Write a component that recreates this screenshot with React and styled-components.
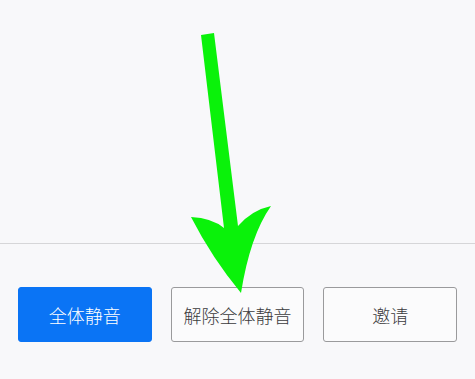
import styled, { createGlobalStyle } from "styled-components"

const Global = createGlobalStyle`
    html, body {
        margin: 0;
        padding: 0;
        background: #f8f8fa;
    }
    body {
        font-family: "Noto Sans CJK SC", "Noto Sans", sans-serif;
    }
`

export default function App () {
    return(
        <Page>
            <Global/>
            <Top/>
            <Divider/>
            <Toolbar>
                <Button primary>全体静音</Button>
                <Button>解除全体静音</Button>
                <Button>邀请</Button>
            </Toolbar>
            <Arrow width="475" height="379" viewBox="0 0 475 379">
                <path
                    d="M201 35 L214 33 L238 226 Q252 210 271 206 Q250 236 241 293 Q212 258 191 217 Q212 218 224 228 Z"
                    fill="#0af20a"
                />
            </Arrow>
        </Page>
    )
}

const Page = styled.div`
    width: 475px;
    height: 379px;
    position: relative;
    overflow: hidden;
    background: #f8f8fa;
`
const Top = styled.div`
    height: 243px;
`
const Divider = styled.div`
    height: 1px;
    background: #d6d6d8;
`
const Toolbar = styled.div`
    display: flex;
    gap: 19px;
    padding: 43px 18px 0 18px;
`
const Button = styled.div`
    width: 134px;
    height: 55px;
    box-sizing: border-box;
    display: flex;
    align-items: center;
    justify-content: center;
    font-size: 18px;
    font-weight: 300;
    border-radius: 3px;
    background: ${props => props.primary ? "#0a74f5" : "#fbfbfc"};
    color: ${props => props.primary ? "#ffffff" : "#3a3a3c"};
    border: 1px solid ${props => props.primary ? "#0a74f5" : "#9a9a9c"};
`
const Arrow = styled.svg`
    position: absolute;
    left: 0;
    top: 0;
    pointer-events: none;
`
